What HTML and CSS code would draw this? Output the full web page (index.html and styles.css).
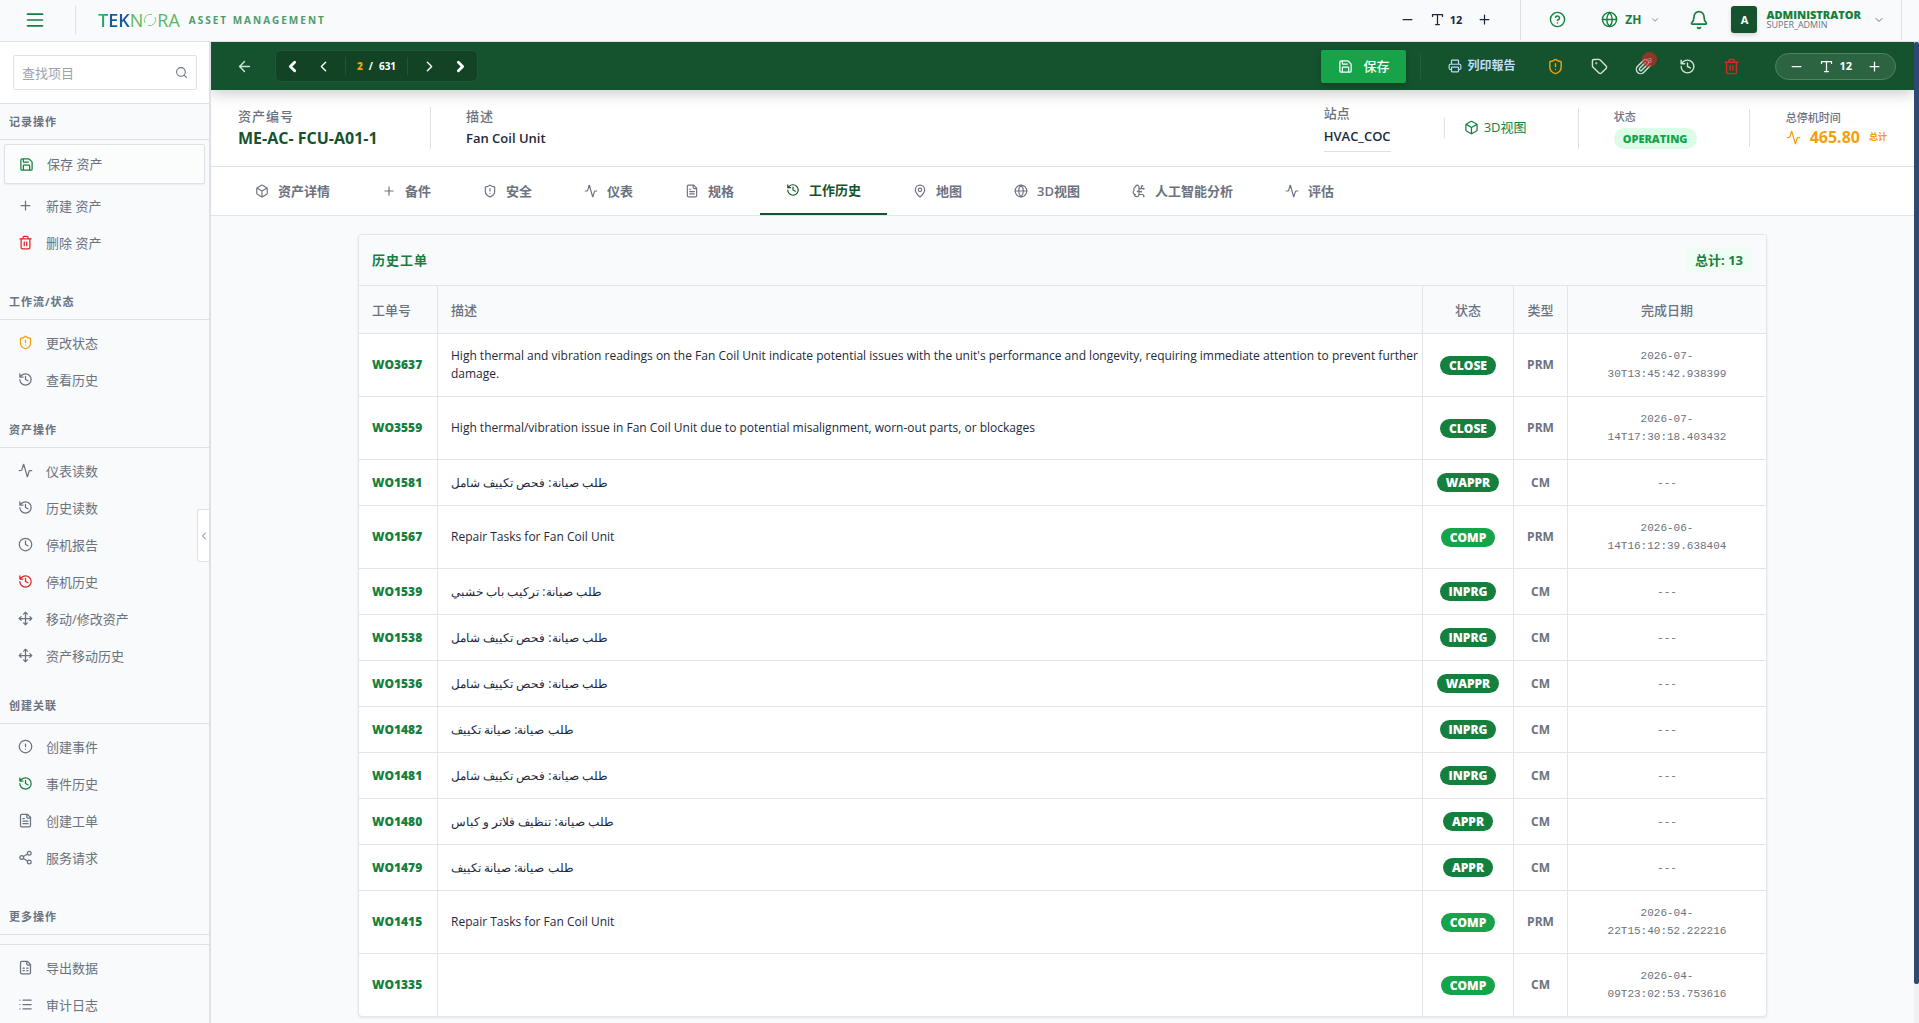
FILE: index.html
```
<!DOCTYPE html>
<html lang="zh">
<head>
    <meta charset="UTF-8">
    <meta name="viewport" content="width=device-width, initial-scale=1.0">
    <title>Teknora Asset Management</title>
    <link rel="stylesheet" href="styles.css">
</head>
<body>
    <!-- Icon set -->
    <svg class="sprite" aria-hidden="true">
        <symbol id="i-menu" viewBox="0 0 24 24"><path d="M3 5h18M3 12h18M3 19h18"/></symbol>
        <symbol id="i-minus" viewBox="0 0 24 24"><path d="M5 12h14"/></symbol>
        <symbol id="i-plus" viewBox="0 0 24 24"><path d="M5 12h14M12 5v14"/></symbol>
        <symbol id="i-type" viewBox="0 0 24 24"><path d="M4 7V4h16v3M9 20h6M12 4v16"/></symbol>
        <symbol id="i-help" viewBox="0 0 24 24"><circle cx="12" cy="12" r="10"/><path d="M9.1 9a3 3 0 0 1 5.8 1c0 2-3 3-3 3M12 17h.01"/></symbol>
        <symbol id="i-globe" viewBox="0 0 24 24"><circle cx="12" cy="12" r="10"/><path d="M12 2a14.5 14.5 0 0 0 0 20 14.5 14.5 0 0 0 0-20M2 12h20"/></symbol>
        <symbol id="i-down" viewBox="0 0 24 24"><path d="m6 9 6 6 6-6"/></symbol>
        <symbol id="i-left" viewBox="0 0 24 24"><path d="m15 18-6-6 6-6"/></symbol>
        <symbol id="i-right" viewBox="0 0 24 24"><path d="m9 18 6-6-6-6"/></symbol>
        <symbol id="i-back" viewBox="0 0 24 24"><path d="m12 19-7-7 7-7M19 12H5"/></symbol>
        <symbol id="i-bell" viewBox="0 0 24 24"><path d="M10.3 21a1.94 1.94 0 0 0 3.4 0M3.3 15.3A1 1 0 0 0 4 17h16a1 1 0 0 0 .7-1.7C19.4 14 18 12.500 18 8A6 6 0 0 0 6 8c0 4.500-1.400 6-2.700 7.300"/></symbol>
        <symbol id="i-search" viewBox="0 0 24 24"><circle cx="11" cy="11" r="8"/><path d="m21 21-4.300-4.300"/></symbol>
        <symbol id="i-save" viewBox="0 0 24 24"><path d="M15.200 3a2 2 0 0 1 1.400.6l3.800 3.800a2 2 0 0 1 .6 1.400V19a2 2 0 0 1-2 2H5a2 2 0 0 1-2-2V5a2 2 0 0 1 2-2zM17 21v-7a1 1 0 0 0-1-1H8a1 1 0 0 0-1 1v7M7 3v4a1 1 0 0 0 1 1h7"/></symbol>
        <symbol id="i-trash" viewBox="0 0 24 24"><path d="M3 6h18M19 6v14a2 2 0 0 1-2 2H7a2 2 0 0 1-2-2V6M8 6V4a2 2 0 0 1 2-2h4a2 2 0 0 1 2 2v2M10 11v6M14 11v6"/></symbol>
        <symbol id="i-shield" viewBox="0 0 24 24"><path d="M20 13c0 5-3.500 7.500-7.700 9a1 1 0 0 1-.6 0C7.500 20.500 4 18 4 13V6a1 1 0 0 1 1-1c2 0 4.500-1.200 6.200-2.700a1.200 1.200 0 0 1 1.600 0C14.500 3.800 17 5 19 5a1 1 0 0 1 1 1zM12 8v4M12 16h.01"/></symbol>
        <symbol id="i-history" viewBox="0 0 24 24"><path d="M3 12a9 9 0 1 0 9-9 9.750 9.750 0 0 0-6.700 2.700L3 8M3 3v5h5M12 7v5l4 2"/></symbol>
        <symbol id="i-pulse" viewBox="0 0 24 24"><path d="M22 12h-2.500a2 2 0 0 0-1.900 1.500l-2.400 8.300a.25.25 0 0 1-.4 0L9.200 2.200a.25.25 0 0 0-.4 0l-2.400 8.300A2 2 0 0 1 4.500 12H2"/></symbol>
        <symbol id="i-clock" viewBox="0 0 24 24"><circle cx="12" cy="12" r="10"/><path d="M12 6v6l4 2"/></symbol>
        <symbol id="i-move" viewBox="0 0 24 24"><path d="M12 2v20M15 19l-3 3-3-3M19 9l3 3-3 3M2 12h20M5 9l-3 3 3 3M9 5l3-3 3 3"/></symbol>
        <symbol id="i-alert" viewBox="0 0 24 24"><circle cx="12" cy="12" r="10"/><path d="M12 8v4M12 16h.01"/></symbol>
        <symbol id="i-file" viewBox="0 0 24 24"><path d="M15 2H6a2 2 0 0 0-2 2v16a2 2 0 0 0 2 2h12a2 2 0 0 0 2-2V7zM14 2v4a2 2 0 0 0 2 2h4M10 9H8M16 13H8M16 17H8"/></symbol>
        <symbol id="i-sheet" viewBox="0 0 24 24"><path d="M15 2H6a2 2 0 0 0-2 2v16a2 2 0 0 0 2 2h12a2 2 0 0 0 2-2V7zM14 2v4a2 2 0 0 0 2 2h4M8 13h2M14 13h2M8 17h2M14 17h2"/></symbol>
        <symbol id="i-share" viewBox="0 0 24 24"><circle cx="18" cy="5" r="3"/><circle cx="6" cy="12" r="3"/><circle cx="18" cy="19" r="3"/><path d="m8.600 13.500 6.800 4M15.400 6.500l-6.800 4"/></symbol>
        <symbol id="i-list" viewBox="0 0 24 24"><path d="M3 5h.01M3 12h.01M3 19h.01M8 5h13M8 12h13M8 19h13"/></symbol>
        <symbol id="i-print" viewBox="0 0 24 24"><path d="M6 18H4a2 2 0 0 1-2-2v-5a2 2 0 0 1 2-2h16a2 2 0 0 1 2 2v5a2 2 0 0 1-2 2h-2M6 9V3a1 1 0 0 1 1-1h10a1 1 0 0 1 1 1v6"/><rect x="6" y="14" width="12" height="8" rx="1"/></symbol>
        <symbol id="i-tag" viewBox="0 0 24 24"><path d="M12.600 2.600A2 2 0 0 0 11.200 2H4a2 2 0 0 0-2 2v7.200a2 2 0 0 0 .6 1.400l8.700 8.700a2.400 2.400 0 0 0 3.400 0l6.600-6.600a2.400 2.400 0 0 0 0-3.400z"/><circle cx="7.500" cy="7.500" r=".5"/></symbol>
        <symbol id="i-clip" viewBox="0 0 24 24"><path d="m21.400 11.100-9.200 9.200a6 6 0 0 1-8.500-8.500l8.600-8.600a4 4 0 1 1 5.700 5.700l-8.600 8.500a2 2 0 0 1-2.800-2.800l8.500-8.500"/></symbol>
        <symbol id="i-box" viewBox="0 0 24 24"><path d="M21 8a2 2 0 0 0-1-1.700l-7-4a2 2 0 0 0-2 0l-7 4A2 2 0 0 0 3 8v8a2 2 0 0 0 1 1.700l7 4a2 2 0 0 0 2 0l7-4A2 2 0 0 0 21 16zM3.300 7l8.700 5 8.700-5M12 22V12"/></symbol>
        <symbol id="i-pin" viewBox="0 0 24 24"><path d="M20 10c0 5-5.500 10.200-7.400 11.800a1 1 0 0 1-1.200 0C9.500 20.200 4 15 4 10a8 8 0 0 1 16 0"/><circle cx="12" cy="10" r="3"/></symbol>
        <symbol id="i-brain" viewBox="0 0 24 24"><path d="M12 5a3 3 0 1 0-6 .1 4 4 0 0 0-2.500 5.800 4 4 0 0 0 .5 6.600A4 4 0 1 0 12 18zM9 13a4.500 4.500 0 0 0 3-4M6 18a4 4 0 0 1-2-.5M12 13h4M12 18h6a2 2 0 0 1 2 2v1M12 8h8M16 8V5a2 2 0 0 1 2-2"/><circle cx="16" cy="13" r=".5"/><circle cx="18" cy="3" r=".5"/><circle cx="20" cy="21" r=".5"/><circle cx="20" cy="8" r=".5"/></symbol>
    </svg>

    <header class="topbar">
        <button class="icon-btn menu-btn" aria-label="菜单"><svg class="icon icon-lg"><use href="#i-menu"/></svg></button>
        <a class="brand" href="#">
            <span class="logo"><span class="logo-blue">TEK</span>N<svg class="logo-o" viewBox="0 0 14 14"><path d="M2 10A6 6 0 0 1 9 1.500"/><path d="M12 4A6 6 0 0 1 5 12.500"/></svg>RA</span>
            <span class="brand-sub">ASSET MANAGEMENT</span>
        </a>
        <div class="font-size">
            <button class="icon-btn" aria-label="缩小"><svg class="icon"><use href="#i-minus"/></svg></button>
            <span class="size-value"><svg class="icon"><use href="#i-type"/></svg>12</span>
            <button class="icon-btn" aria-label="放大"><svg class="icon"><use href="#i-plus"/></svg></button>
        </div>
        <div class="top-actions">
            <button class="icon-btn" aria-label="帮助"><svg class="icon icon-md"><use href="#i-help"/></svg></button>
            <button class="icon-btn lang"><svg class="icon icon-md"><use href="#i-globe"/></svg>ZH<svg class="icon icon-xs muted"><use href="#i-down"/></svg></button>
            <button class="icon-btn" aria-label="通知"><svg class="icon icon-lg"><use href="#i-bell"/></svg></button>
            <button class="icon-btn user">
                <span class="avatar">A</span>
                <span class="user-text"><b>ADMINISTRATOR</b><small>SUPER_ADMIN</small></span>
                <svg class="icon icon-sm muted"><use href="#i-down"/></svg>
            </button>
        </div>
    </header>

    <div class="layout">
        <aside class="sidebar">
            <div class="search">
                <label class="search-box">
                    <input type="text" placeholder="查找项目" aria-label="查找项目">
                    <svg class="icon"><use href="#i-search"/></svg>
                </label>
            </div>

            <h2 class="group-title">记录操作</h2>
            <nav class="group group-long">
                <a class="item item-active" href="#"><svg class="icon green"><use href="#i-save"/></svg>保存 资产</a>
                <a class="item" href="#"><svg class="icon"><use href="#i-plus"/></svg>新建 资产</a>
                <a class="item" href="#"><svg class="icon red"><use href="#i-trash"/></svg>删除 资产</a>
            </nav>

            <h2 class="group-title">工作流/状态</h2>
            <nav class="group">
                <a class="item" href="#"><svg class="icon amber"><use href="#i-shield"/></svg>更改状态</a>
                <a class="item" href="#"><svg class="icon"><use href="#i-history"/></svg>查看历史</a>
            </nav>

            <h2 class="group-title">资产操作</h2>
            <nav class="group">
                <a class="item" href="#"><svg class="icon"><use href="#i-pulse"/></svg>仪表读数</a>
                <a class="item" href="#"><svg class="icon"><use href="#i-history"/></svg>历史读数</a>
                <a class="item" href="#"><svg class="icon"><use href="#i-clock"/></svg>停机报告</a>
                <a class="item" href="#"><svg class="icon red"><use href="#i-history"/></svg>停机历史</a>
                <a class="item" href="#"><svg class="icon"><use href="#i-move"/></svg>移动/修改资产</a>
                <a class="item" href="#"><svg class="icon"><use href="#i-move"/></svg>资产移动历史</a>
            </nav>

            <h2 class="group-title">创建关联</h2>
            <nav class="group group-long">
                <a class="item" href="#"><svg class="icon"><use href="#i-alert"/></svg>创建事件</a>
                <a class="item" href="#"><svg class="icon green"><use href="#i-history"/></svg>事件历史</a>
                <a class="item" href="#"><svg class="icon"><use href="#i-file"/></svg>创建工单</a>
                <a class="item" href="#"><svg class="icon"><use href="#i-share"/></svg>服务请求</a>
            </nav>

            <h2 class="group-title">更多操作</h2>
            <nav class="group group-ruled">
                <a class="item" href="#"><svg class="icon"><use href="#i-sheet"/></svg>导出数据</a>
                <a class="item" href="#"><svg class="icon"><use href="#i-list"/></svg>审计日志</a>
            </nav>

            <button class="collapse" aria-label="收起"><svg class="icon icon-sm"><use href="#i-left"/></svg></button>
        </aside>

        <main class="main">
            <div class="toolbar">
                <button class="icon-btn back" aria-label="返回"><svg class="icon icon-md"><use href="#i-back"/></svg></button>
                <div class="pager">
                    <button class="icon-btn" aria-label="第一条"><svg class="icon icon-md heavy"><use href="#i-left"/></svg></button>
                    <button class="icon-btn" aria-label="上一条"><svg class="icon icon-md"><use href="#i-left"/></svg></button>
                    <span class="pager-count"><b>2</b><span>/</span><span>631</span></span>
                    <button class="icon-btn" aria-label="下一条"><svg class="icon icon-md"><use href="#i-right"/></svg></button>
                    <button class="icon-btn" aria-label="最后一条"><svg class="icon icon-md heavy"><use href="#i-right"/></svg></button>
                </div>
                <button class="save"><svg class="icon"><use href="#i-save"/></svg>保存</button>
                <div class="tools">
                    <button class="icon-btn print"><svg class="icon icon-tab"><use href="#i-print"/></svg>列印報告</button>
                    <button class="icon-btn amber" aria-label="状态"><svg class="icon icon-md"><use href="#i-shield"/></svg></button>
                    <button class="icon-btn" aria-label="标签"><svg class="icon icon-md"><use href="#i-tag"/></svg></button>
                    <button class="icon-btn attach" aria-label="附件"><svg class="icon icon-md"><use href="#i-clip"/></svg><span class="count">3</span></button>
                    <button class="icon-btn" aria-label="历史"><svg class="icon icon-md"><use href="#i-history"/></svg></button>
                    <button class="icon-btn danger" aria-label="删除"><svg class="icon icon-md"><use href="#i-trash"/></svg></button>
                </div>
                <div class="font-size font-pill">
                    <button class="icon-btn" aria-label="缩小"><svg class="icon"><use href="#i-minus"/></svg></button>
                    <span class="size-value"><svg class="icon"><use href="#i-type"/></svg>12</span>
                    <button class="icon-btn" aria-label="放大"><svg class="icon"><use href="#i-plus"/></svg></button>
                </div>
            </div>

            <section class="summary">
                <div class="field field-id">
                    <span class="label wide">资产编号</span>
                    <strong class="asset-id">ME-AC- FCU-A01-1</strong>
                </div>
                <div class="field field-desc">
                    <span class="label wide">描述</span>
                    <strong class="value">Fan Coil Unit</strong>
                </div>
                <div class="field field-site">
                    <span class="label">站点</span>
                    <strong class="value underlined">HVAC_COC</strong>
                </div>
                <div class="field-view">
                    <a href="#"><svg class="icon"><use href="#i-box"/></svg>3D视图</a>
                </div>
                <div class="field field-status">
                    <span class="label small">状态</span>
                    <span class="status-pill">OPERATING</span>
                </div>
                <div class="field field-down">
                    <span class="label small">总停机时间</span>
                    <span class="downtime"><svg class="icon"><use href="#i-pulse"/></svg>465.80<small>总计</small></span>
                </div>
            </section>

            <nav class="tabs">
                <a href="#"><svg class="icon icon-tab"><use href="#i-box"/></svg>资产详情</a>
                <a href="#"><svg class="icon icon-tab"><use href="#i-plus"/></svg>备件</a>
                <a href="#"><svg class="icon icon-tab"><use href="#i-shield"/></svg>安全</a>
                <a href="#"><svg class="icon icon-tab"><use href="#i-pulse"/></svg>仪表</a>
                <a href="#"><svg class="icon icon-tab"><use href="#i-file"/></svg>规格</a>
                <a class="current" href="#"><svg class="icon icon-tab"><use href="#i-history"/></svg>工作历史</a>
                <a href="#"><svg class="icon icon-tab"><use href="#i-pin"/></svg>地图</a>
                <a href="#"><svg class="icon icon-tab"><use href="#i-globe"/></svg>3D视图</a>
                <a href="#"><svg class="icon icon-tab"><use href="#i-brain"/></svg>人工智能分析</a>
                <a href="#"><svg class="icon icon-tab"><use href="#i-pulse"/></svg>评估</a>
            </nav>

            <div class="content">
                <section class="card">
                    <div class="card-head">
                        <h1>历史工单</h1>
                        <span class="total">总计: 13</span>
                    </div>
                    <table class="orders">
                        <colgroup>
                            <col class="col-no"><col><col class="col-status"><col class="col-type"><col class="col-date">
                        </colgroup>
                        <thead>
                            <tr><th>工单号</th><th>描述</th><th>状态</th><th>类型</th><th>完成日期</th></tr>
                        </thead>
                        <tbody>
                            <tr><td>WO3637</td><td>High thermal and vibration readings on the Fan Coil Unit indicate potential issues with the unit's performance and longevity, requiring immediate attention to prevent further damage.</td><td><span class="pill">CLOSE</span></td><td>PRM</td><td>2026-07-30T13:45:42.938399</td></tr>
                            <tr><td>WO3559</td><td>High thermal/vibration issue in Fan Coil Unit due to potential misalignment, worn-out parts, or blockages</td><td><span class="pill">CLOSE</span></td><td>PRM</td><td>2026-07-14T17:30:18.403432</td></tr>
                            <tr><td>WO1581</td><td><bdi>طلب صيانة: فحص تكييف شامل</bdi></td><td><span class="pill">WAPPR</span></td><td>CM</td><td>---</td></tr>
                            <tr><td>WO1567</td><td>Repair Tasks for Fan Coil Unit</td><td><span class="pill pill-comp">COMP</span></td><td>PRM</td><td>2026-06-14T16:12:39.638404</td></tr>
                            <tr><td>WO1539</td><td><bdi>طلب صيانة: تركيب باب خشبي</bdi></td><td><span class="pill">INPRG</span></td><td>CM</td><td>---</td></tr>
                            <tr><td>WO1538</td><td><bdi>طلب صيانة: فحص تكييف شامل</bdi></td><td><span class="pill">INPRG</span></td><td>CM</td><td>---</td></tr>
                            <tr><td>WO1536</td><td><bdi>طلب صيانة: فحص تكييف شامل</bdi></td><td><span class="pill">WAPPR</span></td><td>CM</td><td>---</td></tr>
                            <tr><td>WO1482</td><td><bdi>طلب صيانة: صيانة تكييف</bdi></td><td><span class="pill">INPRG</span></td><td>CM</td><td>---</td></tr>
                            <tr><td>WO1481</td><td><bdi>طلب صيانة: فحص تكييف شامل</bdi></td><td><span class="pill">INPRG</span></td><td>CM</td><td>---</td></tr>
                            <tr><td>WO1480</td><td><bdi>طلب صيانة: تنظيف فلاتر و كباس</bdi></td><td><span class="pill">APPR</span></td><td>CM</td><td>---</td></tr>
                            <tr><td>WO1479</td><td><bdi>طلب صيانة: صيانة تكييف</bdi></td><td><span class="pill">APPR</span></td><td>CM</td><td>---</td></tr>
                            <tr><td>WO1415</td><td>Repair Tasks for Fan Coil Unit</td><td><span class="pill pill-comp">COMP</span></td><td>PRM</td><td>2026-04-22T15:40:52.222216</td></tr>
                            <tr><td>WO1335</td><td></td><td><span class="pill pill-comp">COMP</span></td><td>CM</td><td>2026-04-09T23:02:53.753616</td></tr>
                        </tbody>
                    </table>
                </section>
            </div>
        </main>
        <div class="scroll-track"><div class="scroll-thumb"></div></div>
    </div>
</body>
</html>
```
FILE: styles.css
```
* {
    box-sizing: border-box;
}
body {
    margin: 0;
    height: 100vh;
    display: flex;
    flex-direction: column;
    overflow: hidden;
    background-color: #f8fafc;
    color: #1e293b;
    font-family: "Open Sans", "Noto Sans CJK SC", sans-serif;
    font-size: 12px;
    line-height: 18px;
}
a {
    color: inherit;
    text-decoration: none;
}
button, input {
    font: inherit;
    color: inherit;
}
.sprite {
    display: none;
}

/* Icons */
.icon {
    width: 15px;
    height: 15px;
    flex: none;
    fill: none;
    stroke: currentColor;
    stroke-width: 2;
    stroke-linecap: round;
    stroke-linejoin: round;
}
.icon-xs { width: 10px; height: 10px; }
.icon-sm { width: 12px; height: 12px; }
.icon-tab { width: 14px; height: 14px; }
.icon-md { width: 17px; height: 17px; }
.icon-lg { width: 20px; height: 20px; }
.icon.heavy { stroke-width: 4; }
.icon-btn {
    display: flex;
    align-items: center;
    justify-content: center;
    padding: 0;
    border: none;
    background: none;
    cursor: pointer;
}
.green { color: #15803d; }
.red { color: #dc2626; }
.amber { color: #f59e0b; }
.muted { color: #6b7280; }

/* Top bar */
.topbar {
    display: flex;
    align-items: center;
    height: 42px;
    flex: none;
    padding: 0 17px 2px 0;
    border-bottom: 1px solid #dee2e6;
    color: #15803d;
}
.menu-btn {
    width: 76px;
    height: 28px;
    padding-right: 6px;
    border-right: 1px solid #dee2e6;
}
.brand {
    display: flex;
    align-items: center;
    gap: 9px;
    margin-left: 22px;
    margin-right: auto;
}
.logo {
    display: flex;
    align-items: center;
    color: #5cb85c;
    font-family: "Open Sans", sans-serif;
    font-size: 18px;
}
.logo-blue {
    font-weight: 600;
    background: linear-gradient(100deg, #35b56a 0 5px, #14599d 14px);
    background-clip: text;
    color: transparent;
}
.logo-o {
    width: 14px;
    height: 14px;
    fill: none;
    stroke: #86cf7f;
    stroke-width: 1;
}
.brand-sub {
    font-size: 10px;
    font-weight: 700;
    letter-spacing: 2px;
    color: #4d9c6c;
}
.font-size {
    display: flex;
    align-items: center;
    gap: 15px;
    padding: 0 28px;
    color: #1e293b;
}
.size-value {
    display: flex;
    align-items: center;
    gap: 5px;
    font-size: 11px;
    font-weight: 700;
}
.top-actions {
    display: flex;
    align-items: center;
    height: 41px;
    padding: 0 16px 0 28px;
    border-left: 1px solid #dee2e6;
    border-right: 1px solid #dee2e6;
}
.lang {
    gap: 7px;
    margin: 0 29px 0 35px;
    font-weight: 700;
}
.lang .icon-xs {
    margin-left: 2px;
}
.user {
    gap: 9px;
    margin-left: 22px;
}
.user .icon-sm {
    margin-left: 3px;
}
.avatar {
    width: 26px;
    height: 27px;
    border-radius: 3px;
    background-color: #14532d;
    color: #ffffff;
    font-size: 11px;
    font-weight: 700;
    line-height: 27px;
    box-shadow: 0 2px 4px rgba(0, 0, 0, 0.15);
}
.user-text {
    display: flex;
    flex-direction: column;
    text-align: left;
}
.user-text b {
    font-size: 11px;
    font-weight: 800;
    line-height: 10px;
}
.user-text small {
    font-size: 9px;
    line-height: 10px;
    color: #6b7280;
}

/* Sidebar */
.layout {
    display: flex;
    flex: 1;
    min-height: 0;
}
.sidebar {
    position: relative;
    width: 211px;
    flex: none;
    overflow: hidden;
    border-right: 2px solid #dee2e6;
    color: #6b7280;
}
.search {
    padding: 13px 12px 13px 13px;
    background-color: #ffffff;
    border-bottom: 1px solid #dee2e6;
}
.search-box {
    display: flex;
    align-items: center;
    height: 35px;
    padding: 0 8px;
    border: 1px solid #dee2e6;
    border-radius: 2px;
}
.search-box input {
    flex: 1;
    min-width: 0;
    padding: 0;
    border: none;
    outline: none;
    background: none;
    font-size: 13px;
}
.search-box input::placeholder {
    color: #9ca3af;
}
.search-box .icon {
    width: 13px;
    height: 13px;
}
.group-title {
    margin: 0;
    height: 36px;
    padding-left: 9px;
    border-bottom: 1px solid #dee2e6;
    font-size: 11px;
    font-weight: 700;
    line-height: 35px;
    letter-spacing: 1px;
}
.group {
    padding: 4px 4px 14px;
}
.group-long {
    padding-bottom: 23px;
}
.group-ruled {
    margin-top: 9px;
    border-top: 1px solid #dee2e6;
}
.item {
    display: flex;
    align-items: center;
    gap: 13px;
    height: 37px;
    padding-left: 14px;
    font-size: 13px;
}
.item-active {
    height: 40px;
    margin-bottom: 3px;
    border: 1px solid #dee2e6;
    border-radius: 2px;
    background-color: #fbfdfc;
    box-shadow: 0 1px 2px rgba(0, 0, 0, 0.06);
}
.collapse {
    position: absolute;
    right: 0;
    top: 467px;
    display: flex;
    align-items: center;
    width: 12px;
    height: 53px;
    padding: 0;
    border: 1px solid #dee2e6;
    border-right: none;
    border-radius: 3px 0 0 3px;
    background-color: #ffffff;
}

/* Toolbar */
.main {
    flex: 1;
    min-width: 0;
    display: flex;
    flex-direction: column;
    overflow: hidden;
}
.toolbar {
    display: flex;
    align-items: center;
    height: 48px;
    flex: none;
    padding: 0 18px 0 25px;
    background-color: #14532d;
    color: #d1e3d7;
    box-shadow: 0 4px 14px rgba(0, 0, 0, 0.2);
    z-index: 1;
}
.pager {
    display: flex;
    align-items: center;
    height: 32px;
    margin: 0 auto 0 22px;
    padding: 0 1px;
    border: 1px solid #21553a;
    border-radius: 6px;
    background-color: #114324;
    color: #ffffff;
}
.pager .icon-btn {
    width: 31px;
}
.pager-count {
    display: flex;
    justify-content: center;
    gap: 6px;
    width: 63px;
    margin: 0 6px;
    border-left: 1px solid #21553a;
    border-right: 1px solid #21553a;
    font-size: 10px;
    font-weight: 700;
}
.pager-count b {
    color: #f59e0b;
}
.save {
    display: flex;
    align-items: center;
    gap: 10px;
    height: 33px;
    padding: 0 17px;
    border: none;
    border-radius: 2px;
    background-color: #16a34a;
    color: #ffffff;
    font-size: 13px;
    font-weight: 500;
    box-shadow: 0 3px 6px rgba(0, 0, 0, 0.2);
}
.tools {
    display: flex;
    align-items: center;
    gap: 27px;
    height: 26px;
    margin-left: 14px;
    padding-left: 27px;
    border-left: 1px solid #23603a;
}
.print {
    gap: 5px;
    margin-right: 5px;
    color: #bfdbfe;
    font-weight: 700;
}
.attach {
    position: relative;
}
.count {
    position: absolute;
    top: -6px;
    right: -5px;
    width: 15px;
    height: 15px;
    border-radius: 50%;
    background-color: rgba(220, 38, 38, 0.6);
    color: #dc9c98;
    font-size: 8px;
    line-height: 15px;
}
.danger {
    color: #dc2626;
}
.font-pill {
    height: 27px;
    margin-left: 35px;
    padding: 0 13px;
    border: 1px solid #528068;
    border-radius: 14px;
    background-color: #2c6442;
    color: #ffffff;
}

/* Asset summary */
.summary {
    display: flex;
    align-items: center;
    height: 77px;
    flex: none;
    padding: 0 27px;
    border-bottom: 1px solid #dee2e6;
    background-color: #ffffff;
    box-shadow: 0 2px 4px rgba(0, 0, 0, 0.08);
}
.field {
    display: flex;
    flex-direction: column;
    align-items: flex-start;
    gap: 2px;
}
.label {
    font-size: 13px;
    font-weight: 500;
    color: #6b7280;
}
.label.wide {
    letter-spacing: 1px;
}
.label.small {
    font-size: 11px;
}
.field-id {
    width: 193px;
    padding-right: 20px;
    border-right: 1px solid #dee2e6;
}
.field-desc {
    margin: 0 auto 0 35px;
}
.asset-id {
    font-size: 16px;
    font-weight: 700;
    line-height: 22px;
    color: #14532d;
    white-space: nowrap;
}
.value {
    font-size: 13px;
    font-weight: 600;
    line-height: 22px;
}
.underlined {
    padding-bottom: 3px;
    border-bottom: 1px solid #dee2e6;
    line-height: 24px;
}
.field-site {
    width: 120px;
}
.field-view {
    width: 134px;
    height: 20px;
    padding-left: 19px;
    border-left: 1px solid #dee2e6;
}
.field-view a {
    display: flex;
    align-items: center;
    gap: 5px;
    font-size: 13px;
    color: #15803d;
}
.field-status {
    width: 171px;
    padding-left: 35px;
    border-left: 1px solid #dee2e6;
}
.status-pill {
    padding: 1px 9px;
    border-radius: 11px;
    background-color: #dcfce7;
    color: #16a34a;
    font-size: 11px;
    font-weight: 800;
    line-height: 19px;
}
.field-down {
    gap: 0;
    padding-left: 36px;
    border-left: 1px solid #dee2e6;
}
.downtime {
    display: flex;
    align-items: center;
    gap: 9px;
    font-size: 16px;
    font-weight: 700;
    line-height: 20px;
    color: #f59e0b;
}
.downtime small {
    font-size: 9px;
}

/* Tabs */
.tabs {
    display: flex;
    height: 49px;
    flex: none;
    padding-left: 18px;
    border-bottom: 1px solid #e2e5e9;
    background-color: #ffffff;
}
.tabs a {
    display: flex;
    align-items: center;
    gap: 9px;
    padding: 0 26px;
    font-size: 13px;
    font-weight: 600;
    color: #6b7280;
}
.tabs .current {
    border-bottom: 2px solid #14532d;
    color: #14532d;
}

/* Work order history */
.content {
    flex: 1;
    min-height: 0;
    overflow: hidden;
    padding: 18px 24px;
}
.card {
    max-width: 1409px;
    margin: 0 auto;
    overflow: hidden;
    border: 1px solid #e2e5e9;
    border-radius: 4px;
    background-color: #ffffff;
    box-shadow: 0 1px 3px rgba(0, 0, 0, 0.08);
}
.card-head {
    display: flex;
    align-items: center;
    justify-content: space-between;
    height: 50px;
    padding: 0 14px 0 13px;
    background-color: #f8fafc;
}
.card-head h1 {
    margin: 0;
    font-size: 13px;
    font-weight: 700;
    letter-spacing: 1px;
    color: #15803d;
}
.total {
    padding: 2px 9px;
    border-radius: 3px;
    background-color: #f0fdf4;
    color: #15803d;
    font-size: 13px;
    font-weight: 700;
    line-height: 20px;
}
.orders {
    width: 100%;
    table-layout: fixed;
    border-collapse: separate;
    border-spacing: 0;
}
.col-no { width: 79px; }
.col-status { width: 91px; }
.col-type { width: 54px; }
.col-date { width: 198px; }
.orders th, .orders td {
    padding: 13px 0;
    border-top: 1px solid #e2e5e9;
    border-right: 1px solid #e2e5e9;
    text-align: center;
}
.orders th:last-child, .orders td:last-child {
    border-right: none;
}
.orders th {
    height: 48px;
    background-color: #f8fafc;
    font-size: 13px;
    font-weight: 500;
    color: #6b7280;
}
.orders th:nth-child(-n+2), .orders td:nth-child(-n+2) {
    padding-left: 13px;
    text-align: left;
}
.orders td:nth-child(1) {
    font-weight: 800;
    color: #15803d;
}
.orders td:nth-child(2) {
    font-weight: 500;
}
.orders td:nth-child(4) {
    font-weight: 700;
    color: #6b7280;
}
.orders td:nth-child(5) {
    padding: 13px 24px;
    font-family: "Liberation Mono", monospace;
    font-size: 11px;
    color: #6b7280;
}
.pill {
    display: inline-block;
    padding: 0 9px;
    border-radius: 10px;
    background-color: #15803d;
    color: #ffffff;
    font-size: 12px;
    font-weight: 800;
    line-height: 19px;
    vertical-align: top;
}
.pill-comp {
    background-color: #16a34a;
}

/* Page scrollbar */
.scroll-track {
    width: 5px;
    flex: none;
    background-color: #f1f1f1;
}
.scroll-thumb {
    height: 96%;
    border-radius: 2px;
    background-color: #2e4a72;
}
```
